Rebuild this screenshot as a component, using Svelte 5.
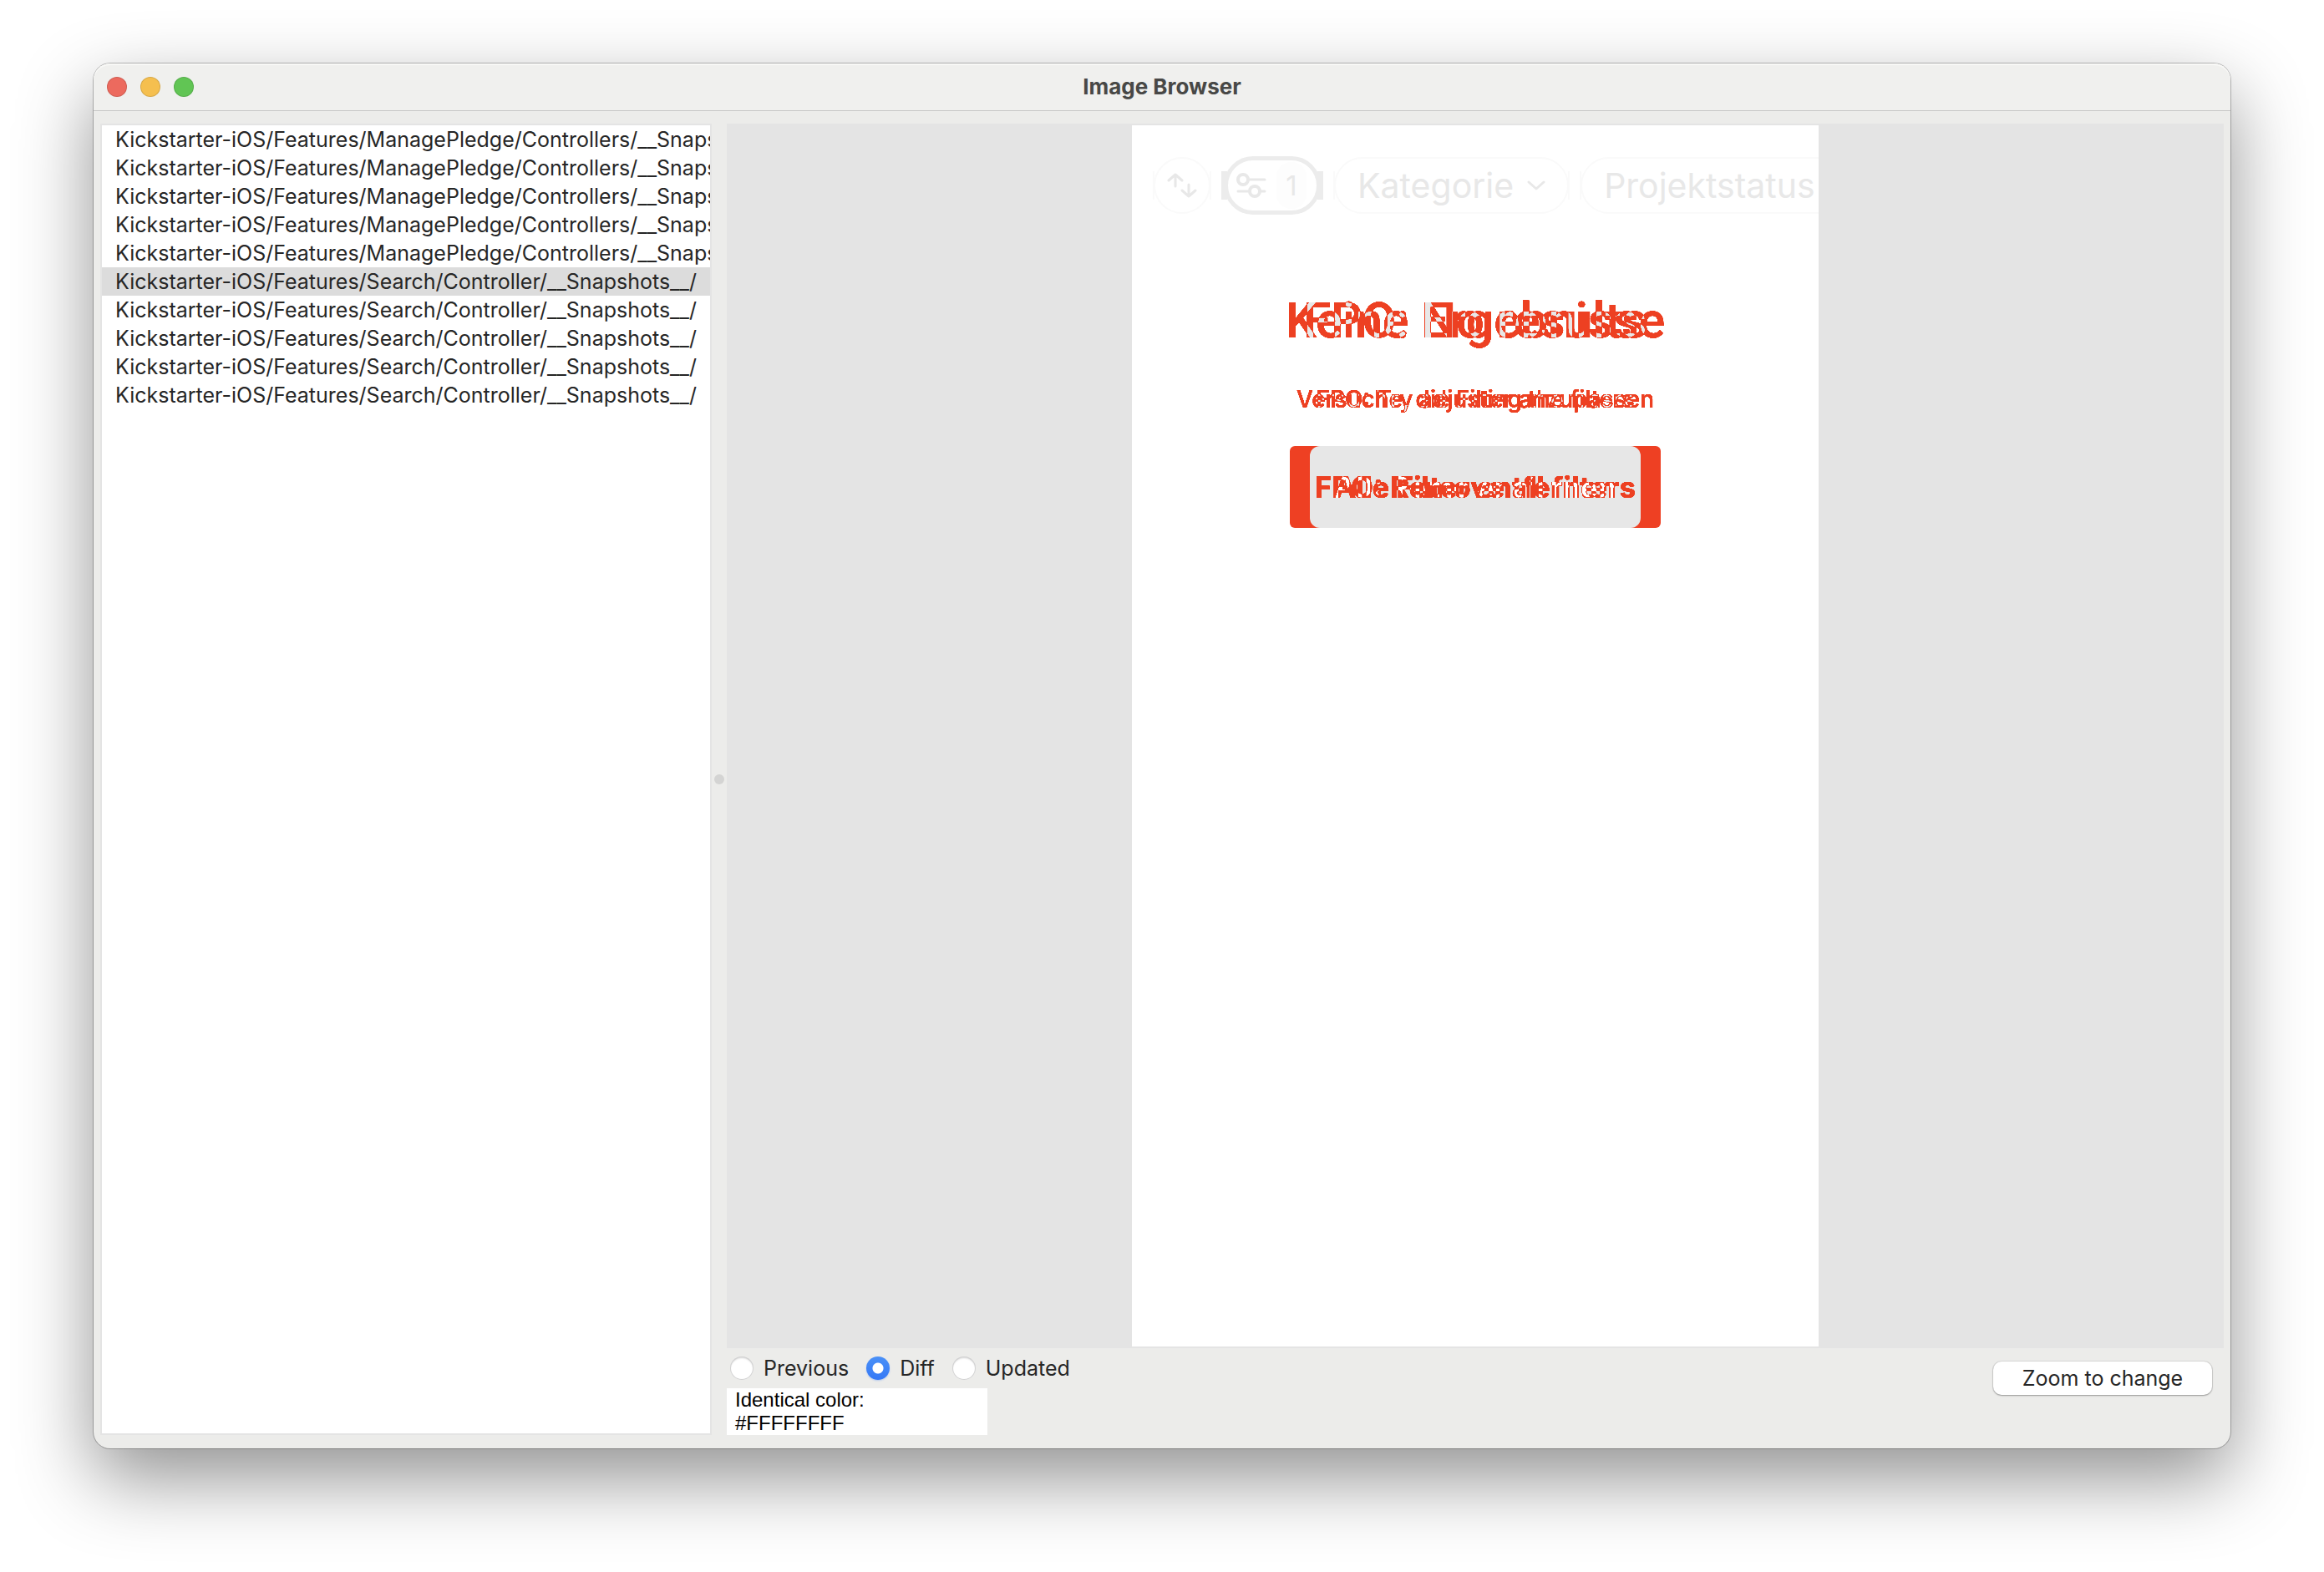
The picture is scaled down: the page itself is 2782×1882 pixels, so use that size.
<script>
  const pledge = 'Kickstarter-iOS/Features/ManagePledge/Controllers/__Snapshots__/';
  const search = 'Kickstarter-iOS/Features/Search/Controller/__Snapshots__/';
  const files = [...Array(5).fill(pledge), ...Array(5).fill(search)];
  let selected = $state(5);
  let mode = $state('Diff');
</script>

<!-- Colour maps for two stacked texts: neither, one only, both -->
<svg class="defs" aria-hidden="true">
  <filter id="diff-page" x="0" y="0" width="100%" height="100%" color-interpolation-filters="sRGB">
    <feColorMatrix values=".5 .5 0 0 0  .5 .5 0 0 0  .5 .5 0 0 0  0 0 0 1 0" />
    <feComponentTransfer>
      <feFuncR type="table" tableValues="1 .933 .933 .933 .933 .933 .933 .933 .91" />
      <feFuncG type="table" tableValues="1 .251 .251 .251 .251 .251 .251 .251 .91" />
      <feFuncB type="table" tableValues="1 .137 .137 .137 .137 .137 .137 .137 .91" />
    </feComponentTransfer>
  </filter>
  <filter id="diff-button" x="0" y="0" width="100%" height="100%" color-interpolation-filters="sRGB">
    <feColorMatrix values=".5 .5 0 0 0  .5 .5 0 0 0  .5 .5 0 0 0  0 0 0 1 0" />
    <feComponentTransfer>
      <feFuncR type="table" tableValues=".906 .933 .933 .933 .933 .933 .933 .933 1" />
      <feFuncG type="table" tableValues=".906 .251 .251 .251 .251 .251 .251 .251 1" />
      <feFuncB type="table" tableValues=".906 .137 .137 .137 .137 .137 .137 .137 1" />
    </feComponentTransfer>
  </filter>
</svg>

<div class="desktop">
  <main class="window">
    <header class="titlebar">
      <div class="lights">
        <button class="light red" aria-label="Close"></button>
        <button class="light yellow" aria-label="Minimize"></button>
        <button class="light green" aria-label="Zoom"></button>
      </div>
      <h1>Image Browser</h1>
    </header>

    <div class="body">
      <nav class="files" aria-label="Images">
        {#each files as file, i}
          <button class="file" class:selected={i === selected} onclick={() => (selected = i)}>{file}</button>
        {/each}
      </nav>
      <div class="splitter"><span class="grip"></span></div>

      <section class="viewer">
        <div class="canvas">
          <div class="page">
            <div class="chips">
              <span class="chip round">
                <svg width="36" height="36" viewBox="0 0 36 36">
                  <path d="M10 19V5M2 12l8-7 8 7M26 17v14M18 24l8 7 8-7" />
                </svg>
              </span>
              <span class="chip active">
                <svg width="36" height="34" viewBox="0 0 36 34">
                  <path d="M15 10h19M2 24h13M29 24h5" />
                  <circle class="bold" cx="8" cy="10" r="6" />
                  <circle class="bold" cx="22" cy="24" r="6" />
                </svg>
                <span class="count">1</span>
              </span>
              <span class="chip">
                Kategorie
                <svg width="22" height="12" viewBox="0 0 22 12"><path d="M2 2l9 8 9-8" /></svg>
              </span>
              <span class="chip">
                Projektstatus
                <svg width="22" height="12" viewBox="0 0 22 12"><path d="M2 2l9 8 9-8" /></svg>
              </span>
            </div>

            <div class="empty">
              <h2 class="diff title"><span>Keine Ergebnisse</span><span>FPO: No results</span></h2>
              <p class="diff note">
                <span>Versuche, die Filter anzupassen</span><span>FPO: Try adjusting the filters</span>
              </p>
              <div class="cta">
                <div class="diff label"><span>Alle Filter entfernen</span><span>FPO: Remove all filters</span></div>
              </div>
            </div>
          </div>
        </div>

        <footer class="controls">
          <div class="left">
            <div class="modes" role="radiogroup" aria-label="Mode">
              {#each ['Previous', 'Diff', 'Updated'] as name}
                <label><input type="radio" name="mode" value={name} bind:group={mode} />{name}</label>
              {/each}
            </div>
            <div class="colour">Identical color:<br />#FFFFFFFF</div>
          </div>
          <button class="zoom">Zoom to change</button>
        </footer>
      </section>
    </div>
  </main>
</div>

<style>
  :global(body) {
    background: #fff;
  }
  .defs {
    position: absolute;
    width: 0;
    height: 0;
  }
  .desktop {
    box-sizing: border-box;
    height: 100vh;
    padding: 76px 112px 148px;
    display: flex;
    font-family: Inter, 'Liberation Sans', sans-serif;
    font-size: 25px;
    color: #262626;
  }
  button {
    font: inherit;
    color: inherit;
    border: 0;
    padding: 0;
  }
  .window {
    flex: 1;
    min-width: 0;
    display: flex;
    flex-direction: column;
    background: #ececea;
    border-radius: 20px;
    box-shadow:
      0 0 0 1px rgba(0, 0, 0, 0.25),
      0 36px 90px rgba(0, 0, 0, 0.43);
  }
  .titlebar {
    height: 56px;
    display: grid;
    grid-template-columns: 1fr auto 1fr;
    align-items: center;
    padding: 0 16px;
    background: #f0f0ee;
    border-bottom: 1px solid #c6c6c5;
    border-radius: 20px 20px 0 0;
    box-shadow: inset 0 2px #f8f8f6;
  }
  .lights {
    display: flex;
    gap: 16px;
  }
  .light {
    width: 24px;
    height: 24px;
    border-radius: 50%;
    border: 1px solid rgba(0, 0, 0, 0.12);
  }
  .red {
    background: #ec6a5e;
  }
  .yellow {
    background: #f5bf4f;
  }
  .green {
    background: #61c554;
  }
  h1 {
    margin: 0;
    font-size: 26px;
    line-height: 32px;
    font-weight: 700;
    color: #484846;
  }
  .body {
    flex: 1;
    min-height: 0;
    display: flex;
    padding: 15px 8px 16px;
  }
  .files {
    flex: none;
    width: 728px;
    background: #fff;
    border: 2px solid #e4e4e4;
    overflow: hidden;
  }
  .file {
    display: block;
    width: 100%;
    height: 34px;
    padding-left: 16px;
    background: none;
    text-align: left;
    white-space: nowrap;
    overflow: hidden;
  }
  .selected {
    background: #dcdcdc;
  }
  .splitter {
    width: 18px;
    display: flex;
    align-items: center;
    justify-content: center;
  }
  .grip {
    width: 12px;
    height: 12px;
    border-radius: 50%;
    background: #d4d4d3;
  }
  .viewer {
    flex: 1;
    min-width: 0;
    display: flex;
    flex-direction: column;
  }
  .canvas {
    flex: 1;
    min-height: 0;
    box-sizing: border-box;
    padding: 2px 0;
    display: flex;
    justify-content: center;
    background: #e4e4e4;
  }
  .page {
    height: 100%;
    aspect-ratio: 822 / 1462;
    background: #fff;
    overflow: hidden;
  }
  .chips {
    height: 72px;
    display: flex;
    align-items: center;
    gap: 14px;
    padding: 36px 0 0 26px;
    font-size: 41px;
    color: #e8e8e8;
  }
  .chip {
    position: relative;
    flex: none;
    box-sizing: border-box;
    height: 68px;
    display: flex;
    align-items: center;
    gap: 16px;
    padding: 0 26px;
    border: 2px solid #fafafa;
    border-radius: 34px;
  }
  /* short bars where the outline touches its left and right bounds */
  .chip::before,
  .chip::after {
    content: '';
    position: absolute;
    top: 50%;
    width: 2px;
    height: 34px;
    margin-top: -17px;
    background: #fafafa;
  }
  .chip::before {
    left: -3px;
  }
  .chip::after {
    right: -3px;
  }
  .chip svg {
    fill: none;
    stroke: #e8e8e8;
    stroke-width: 3;
    stroke-linecap: round;
    stroke-linejoin: round;
  }
  .chip .bold {
    stroke-width: 4;
  }
  .round {
    width: 68px;
    padding: 0;
    justify-content: center;
  }
  .active {
    height: 70px;
    width: 116px;
    margin: 0 2px;
    padding: 0 10px;
    gap: 12px;
    border: 5px solid #ececec;
    border-radius: 35px;
  }
  .active::before,
  .active::after {
    width: 7px;
    background: #ececec;
  }
  .active::before {
    left: -8px;
  }
  .active::after {
    right: -8px;
  }
  .count {
    flex: none;
    width: 36px;
    height: 56px;
    line-height: 56px;
    border-radius: 18px;
    background: #fdfdfd;
    text-align: center;
    font-size: 33px;
  }
  .empty {
    display: flex;
    flex-direction: column;
    align-items: center;
    padding-top: 90px;
  }
  .diff {
    display: grid;
    justify-items: center;
    margin: 0;
    background: #000;
    isolation: isolate;
    white-space: nowrap;
    filter: url(#diff-page);
  }
  .diff span {
    grid-area: 1 / 1;
    color: #f00;
    mix-blend-mode: screen;
  }
  .diff span + span {
    color: #0f0;
  }
  .title {
    font-family: Roboto, 'Liberation Sans', sans-serif;
    font-size: 59px;
    line-height: 72px;
    font-weight: 500;
  }
  .note {
    margin-top: 40px;
    font-size: 28px;
    line-height: 36px;
    font-weight: 500;
  }
  .cta {
    box-sizing: border-box;
    width: 444px;
    margin-top: 38px;
    padding: 0 24px;
    background: #ee4023;
    border-radius: 6px;
  }
  .label {
    font-size: 35px;
    line-height: 98px;
    font-weight: 700;
    border-radius: 12px;
    filter: url(#diff-button);
  }
  .controls {
    height: 104px;
    display: flex;
    justify-content: space-between;
    align-items: flex-start;
  }
  .modes {
    height: 48px;
    display: flex;
    align-items: center;
    gap: 21px;
    padding-left: 4px;
  }
  .modes label {
    display: flex;
    align-items: center;
    gap: 12px;
  }
  .modes input {
    appearance: none;
    width: 28px;
    height: 28px;
    margin: 0;
    border-radius: 50%;
    background: #fff;
    box-shadow:
      inset 0 0 0 1px #d2d2d2,
      inset 0 2px 2px #d8d8d8;
  }
  .modes input:checked {
    background: radial-gradient(circle, #fff 6px, transparent 7px), linear-gradient(#4a90f7, #3478f6);
    box-shadow: 0 1px 2px rgba(52, 120, 246, 0.3);
  }
  .colour {
    box-sizing: border-box;
    width: 312px;
    padding-left: 10px;
    background: #fff;
    font-family: 'Liberation Sans', sans-serif;
    font-size: 24px;
    line-height: 28px;
    color: #000;
  }
  .zoom {
    width: 262px;
    height: 40px;
    margin: 16px 14px 0 0;
    border-radius: 10px;
    background: #fff;
    box-shadow:
      0 0 0 1px rgba(0, 0, 0, 0.08),
      0 1px 2px rgba(0, 0, 0, 0.3);
  }
</style>
